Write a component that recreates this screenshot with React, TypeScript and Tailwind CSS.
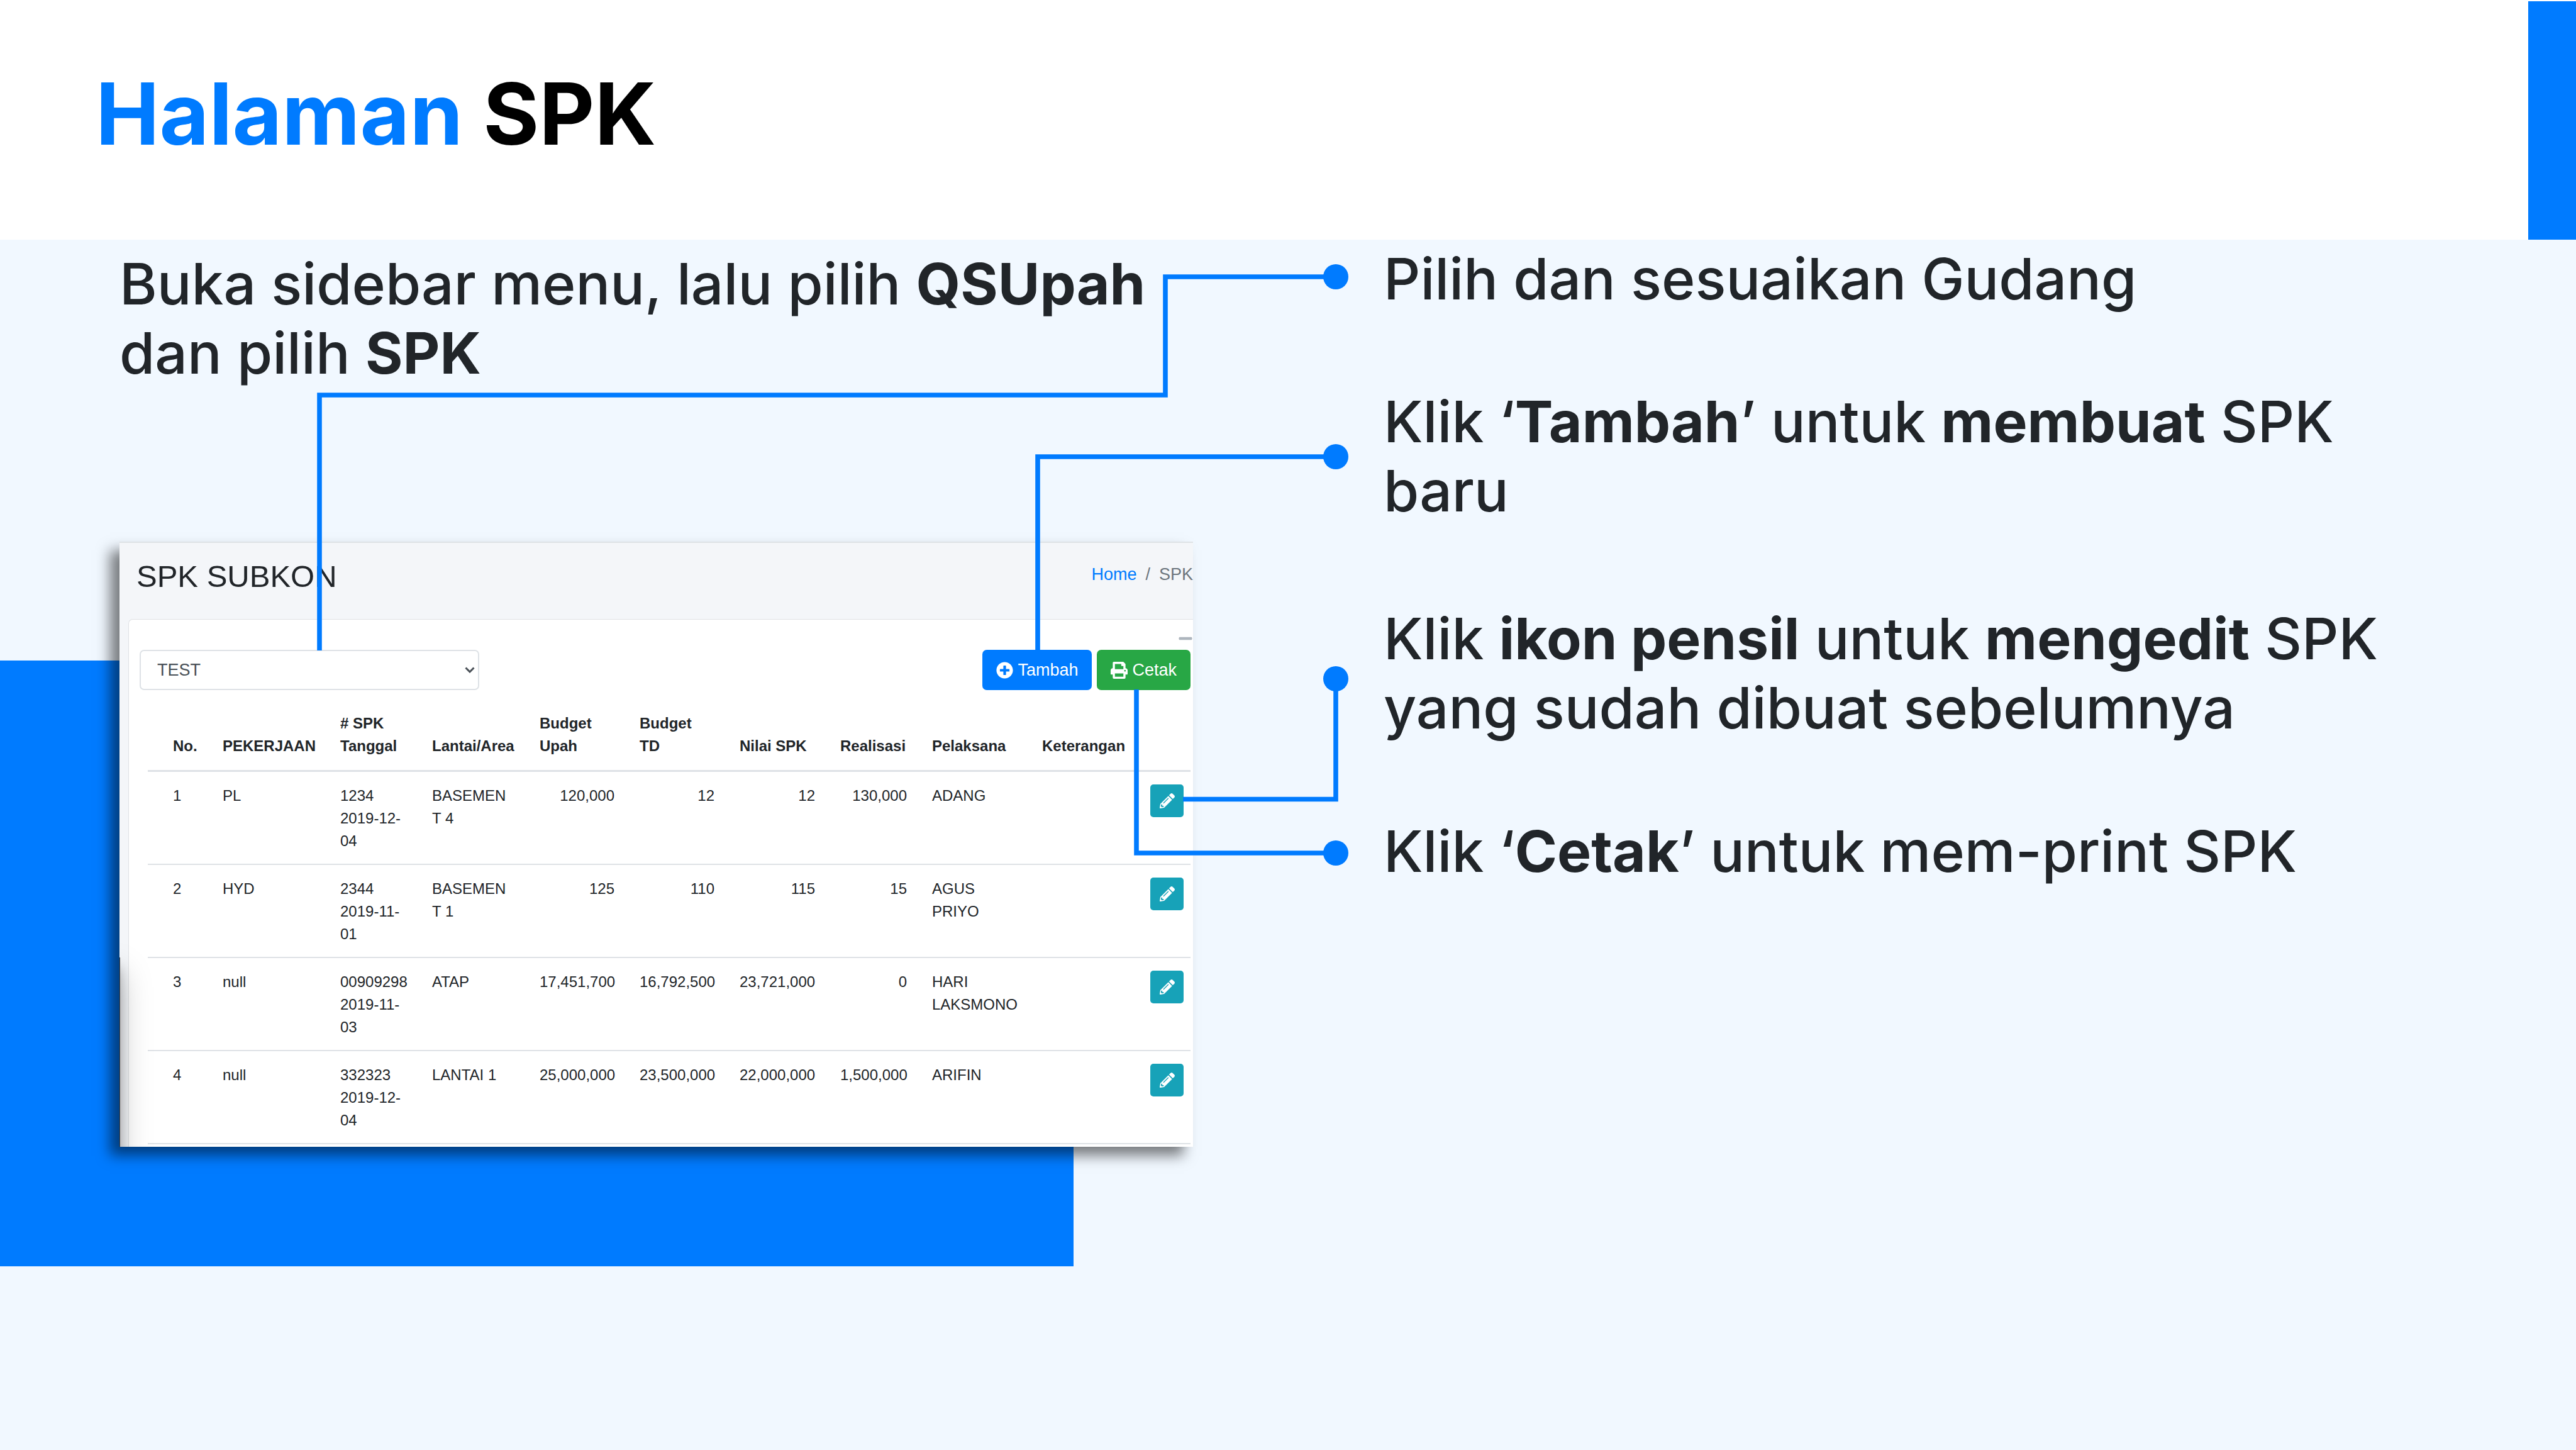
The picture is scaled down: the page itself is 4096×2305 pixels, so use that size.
import { FaMinus, FaPencilAlt, FaPlusCircle, FaPrint } from "react-icons/fa";

type Row = {
  no: number;
  pekerjaan: string;
  spk: string;
  tanggal: string;
  lantai: string;
  upah: string;
  td: string;
  nilai: string;
  realisasi: string;
  pelaksana: string;
};

const rows: Row[] = [
  { no: 1, pekerjaan: "PL", spk: "1234", tanggal: "2019-12-04", lantai: "BASEMENT 4", upah: "120,000", td: "12", nilai: "12", realisasi: "130,000", pelaksana: "ADANG" },
  { no: 2, pekerjaan: "HYD", spk: "2344", tanggal: "2019-11-01", lantai: "BASEMENT 1", upah: "125", td: "110", nilai: "115", realisasi: "15", pelaksana: "AGUS PRIYO" },
  { no: 3, pekerjaan: "null", spk: "00909298", tanggal: "2019-11-03", lantai: "ATAP", upah: "17,451,700", td: "16,792,500", nilai: "23,721,000", realisasi: "0", pelaksana: "HARI LAKSMONO" },
  { no: 4, pekerjaan: "null", spk: "332323", tanggal: "2019-12-04", lantai: "LANTAI 1", upah: "25,000,000", td: "23,500,000", nilai: "22,000,000", realisasi: "1,500,000", pelaksana: "ARIFIN" },
];

function SpkTable() {
  return (
    <table className="w-full table-fixed border-separate border-spacing-0 border-b-2 border-[#dee2e6] text-[24px] leading-[36px]">
      <colgroup>
        <col className="w-[99px]" />
        <col className="w-[187px]" />
        <col className="w-[146px]" />
        <col className="w-[171px]" />
        <col className="w-[159px]" />
        <col className="w-[159px]" />
        <col className="w-[160px]" />
        <col className="w-[146px]" />
        <col className="w-[175px]" />
        <col className="w-[172px]" />
        <col />
      </colgroup>
      <thead>
        <tr className="h-[115px] text-left align-bottom [&>th]:border-b-3 [&>th]:border-[#dee2e6] [&>th]:px-5 [&>th]:pb-5">
          <th className="pl-10!">No.</th>
          <th>PEKERJAAN</th>
          <th># SPK<br />Tanggal</th>
          <th>Lantai/Area</th>
          <th>Budget<br />Upah</th>
          <th>Budget<br />TD</th>
          <th className="whitespace-nowrap">Nilai SPK</th>
          <th>Realisasi</th>
          <th>Pelaksana</th>
          <th>Keterangan</th>
          <th aria-label="Aksi"></th>
        </tr>
      </thead>
      <tbody>
        {rows.map((r) => (
          <tr
            key={r.no}
            className="h-[148px] align-top first:h-[146px] [&>td]:border-t-2 [&>td]:border-[#dee2e6] [&>td]:px-5 [&>td]:pt-5 first:[&>td]:border-t-0"
          >
            <td className="pl-10!">{r.no}</td>
            <td>{r.pekerjaan}</td>
            <td>
              {r.spk}
              <br />
              {r.tanggal}
            </td>
            <td className="break-all">{r.lantai}</td>
            <td className="text-right">{r.upah}</td>
            <td className="text-right">{r.td}</td>
            <td className="text-right">{r.nilai}</td>
            <td className="text-right">{r.realisasi}</td>
            <td>{r.pelaksana}</td>
            <td></td>
            <td>
              <button
                type="button"
                aria-label={`Edit SPK ${r.spk}`}
                className="flex h-[52px] w-[53px] items-center justify-center rounded-[5px] bg-[#17a2b8] text-white"
              >
                <FaPencilAlt size={24} />
              </button>
            </td>
          </tr>
        ))}
      </tbody>
    </table>
  );
}

function AppWindow() {
  return (
    <section className="relative overflow-hidden border-t-2 border-[#dee2e6] bg-[#f4f6f9] font-['Liberation_Sans',Arial,sans-serif] leading-normal font-normal text-[#212529]">
      <div className="flex h-[121px] items-start justify-between pt-[26px] pl-[27px]">
        <h2 className="text-[49px] leading-[54px]">SPK SUBKON</h2>
        <nav aria-label="Breadcrumb" className="flex gap-[14px] pt-1 text-[27px] leading-[40px] text-[#6c757d]">
          <a href="#home" className="text-[#007bff]">Home</a>
          <span>/</span>
          <span>SPK</span>
        </nav>
      </div>
      <div className="ml-[14px] rounded-tl-[7px] border-t border-l border-[#dfe1e4] bg-white pb-1">
        <div className="flex h-[48px] items-center justify-end pt-[12px] text-[#adb5bd]">
          <button type="button" aria-label="Ciutkan">
            <FaMinus size={24} />
          </button>
        </div>
        <div className="flex items-center justify-between pr-1 pl-[17px]">
          <div className="relative">
            <select
              aria-label="Gudang"
              className="block h-[64px] w-[540px] appearance-none rounded-[7px] border-2 border-[#dee2e6] bg-white px-[26px] text-[27px] leading-normal text-[#495057]"
            >
              <option>TEST</option>
            </select>
            <svg viewBox="0 0 16 10" className="pointer-events-none absolute top-[27px] right-[7px] h-[10px] w-[16px]" fill="none" stroke="#495057" strokeWidth="3">
              <path d="M1.500 1.500 8 8l6.500-6.500" />
            </svg>
          </div>
          <div className="flex gap-2 text-[27px] text-white">
            <button type="button" className="flex h-[64px] items-center gap-[7px] rounded-[7px] bg-[#007bff] px-[22px]">
              <FaPlusCircle size={27} />
              Tambah
            </button>
            <button type="button" className="flex h-[64px] items-center gap-[7px] rounded-[7px] bg-[#28a745] px-[22px]">
              <FaPrint size={27} />
              Cetak
            </button>
          </div>
        </div>
        <div className="pt-[15px] pr-1 pl-[30px]">
          <SpkTable />
        </div>
      </div>
      <div className="pointer-events-none absolute top-[659px] -bottom-[200px] -left-[200px] w-[201px] bg-[#3d3a38] shadow-[0_24px_47px_rgba(0,0,0,0.25),0_17px_17px_rgba(0,0,0,0.22)]" />
    </section>
  );
}

function Connectors() {
  return (
    <svg viewBox="0 0 4096 2305" className="pointer-events-none absolute top-0 left-0 w-full" aria-hidden="true">
      <g fill="none" stroke="#007bff" strokeWidth="7.600">
        <path d="M508 1034V628H1853V440H2124" />
        <path d="M1650 1034V726H2124" />
        <path d="M1881 1270.500H2124V1079" />
        <path d="M1807 1096V1356H2124" />
      </g>
      <g fill="#007bff">
        <circle cx="2124" cy="440" r="20" />
        <circle cx="2124" cy="726" r="20" />
        <circle cx="2124" cy="1079" r="20" />
        <circle cx="2124" cy="1356" r="20" />
      </g>
    </svg>
  );
}

export default function App() {
  return (
    <div className="relative flex min-h-screen flex-col bg-[#f1f8ff] font-[Inter,sans-serif]">
      <header className="flex h-[381px] items-stretch justify-between bg-white">
        <h1 className="pt-[98px] pl-[152px] text-[136px] leading-[165px] font-bold text-black">
          <span className="text-[#007bff]">Halaman</span> SPK
        </h1>
        <div className="mt-[2px] w-[76px] bg-[#007bff]" />
      </header>

      <main className="relative flex flex-1 text-[91px] leading-[110px] font-medium text-[#212529]">
        <div className="absolute top-[669px] left-0 h-[963px] w-[1707px] bg-[#007bff]" />
        <div className="relative ml-[190px] w-[1707px] pt-[15px]">
          <p>
            Buka sidebar menu, lalu pilih <strong>QSUpah</strong> dan pilih <strong>SPK</strong>
          </p>
          <div className="mt-[245px] shadow-[-15px_14px_20px_rgba(0,0,0,0.5)]">
            <AppWindow />
          </div>
        </div>
        <div className="relative ml-[303px] w-[1640px] pt-[7px]">
          <p>Pilih dan sesuaikan Gudang</p>
          <p className="mt-[117px]">
            Klik ‘<strong>Tambah</strong>’ untuk <strong>membuat</strong> SPK baru
          </p>
          <p className="mt-[125px]">
            Klik <strong>ikon pensil</strong> untuk <strong>mengedit</strong> SPK yang sudah dibuat sebelumnya
          </p>
          <p className="mt-[118px]">
            Klik ‘<strong>Cetak</strong>’ untuk mem-print SPK
          </p>
        </div>
      </main>
      <Connectors />
    </div>
  );
}
